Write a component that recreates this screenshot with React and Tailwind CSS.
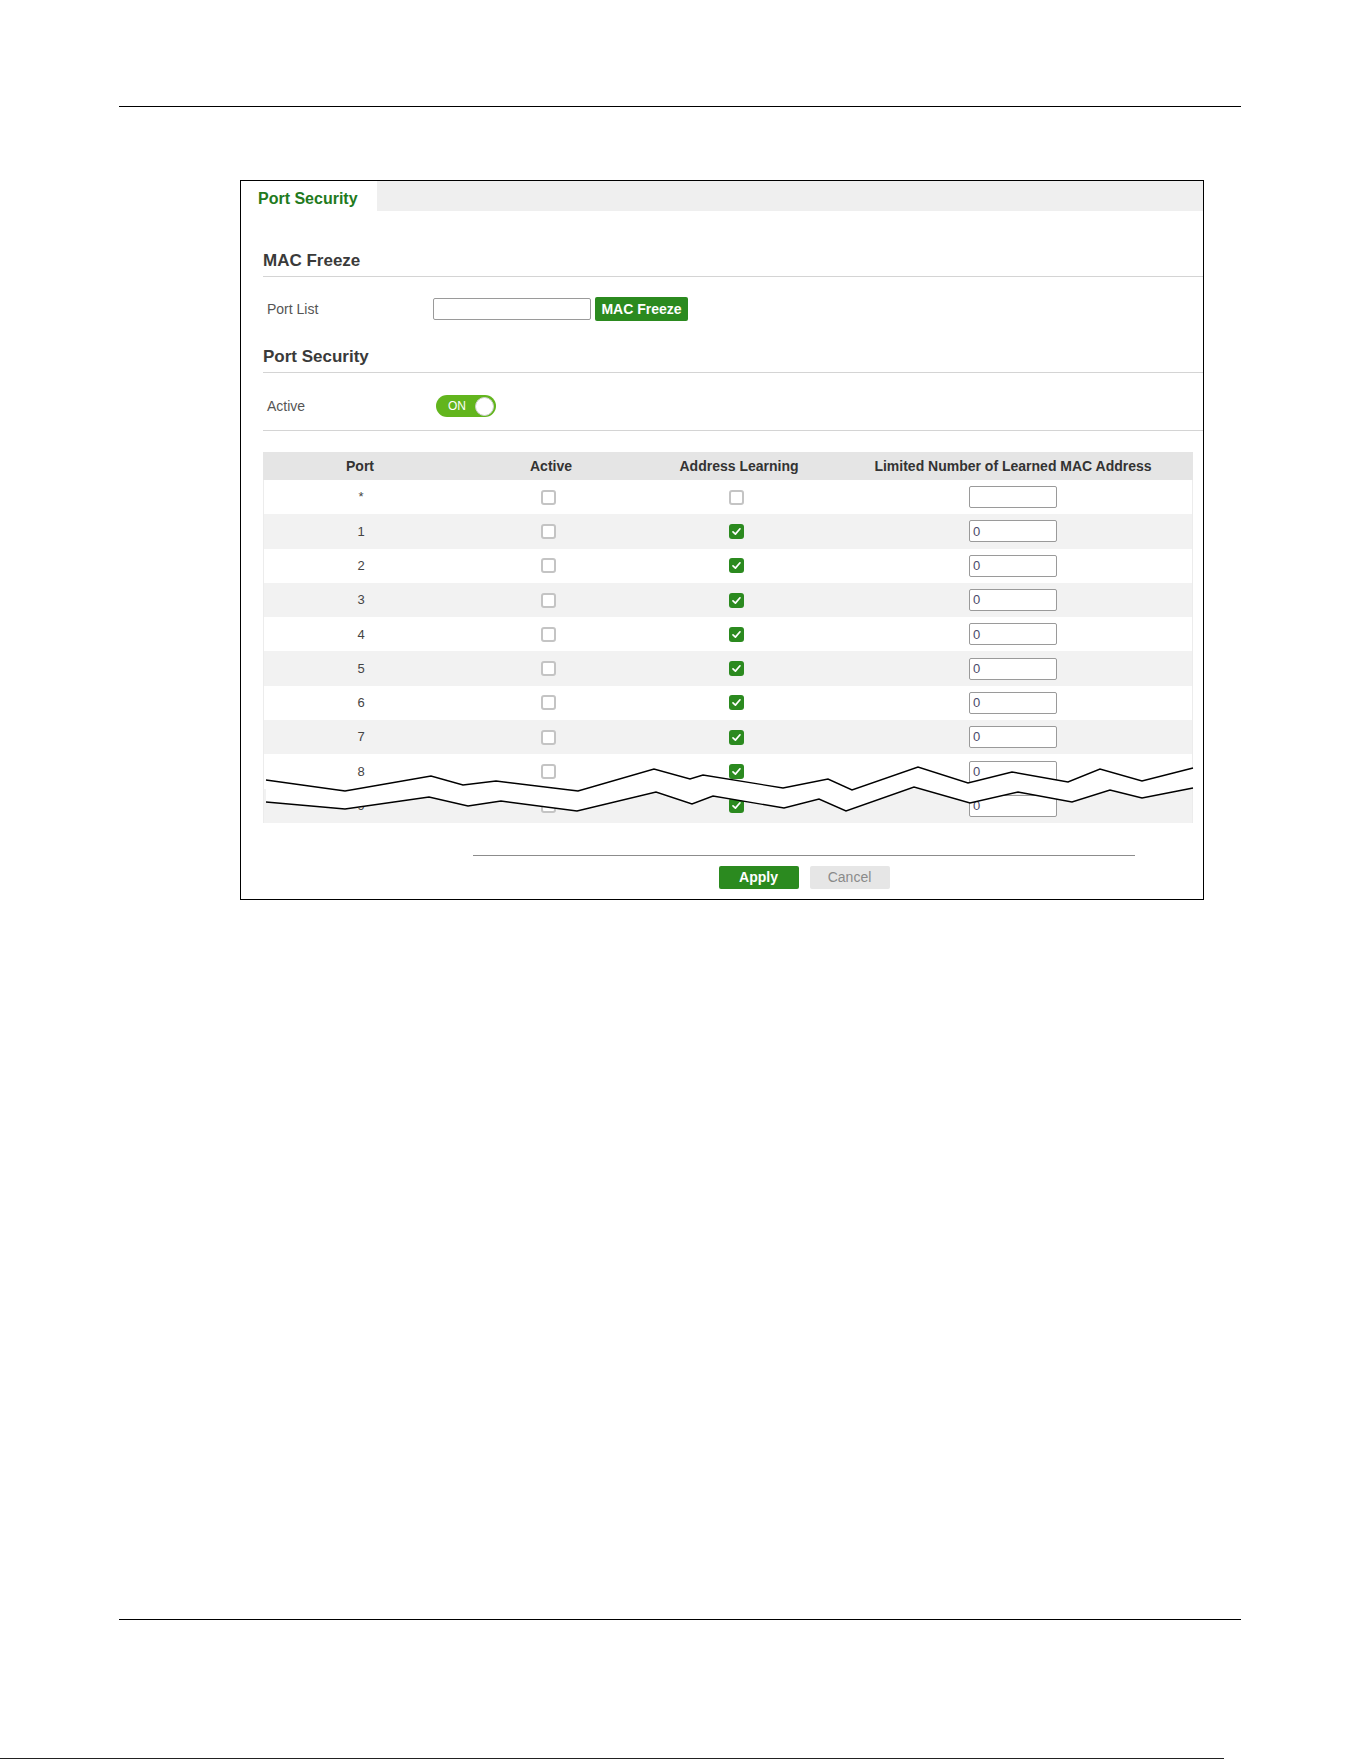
import React from 'react';

const ports = ['*', '1', '2', '3', '4', '5', '6', '7', '8', '9'];

// break marks drawn across the cut-off part of the table (table-local px)
const upperLine = [
  [3, 328], [82, 339], [168, 324], [200, 333], [233, 329], [315, 339], [391, 317],
  [427, 327], [440, 323], [520, 336], [565, 327], [589, 338], [655, 315], [705, 331],
  [749, 320], [805, 330], [837, 317], [879, 329], [930, 316],
];
const lowerLine = [
  [3, 350], [82, 357], [166, 345], [205, 354], [238, 349], [314, 359], [393, 340],
  [429, 352], [450, 344], [521, 356], [556, 347], [583, 359], [651, 335], [707, 351],
  [755, 340], [809, 350], [847, 338], [879, 346], [930, 336],
];
const toPts = (pts) => pts.map(([x, y]) => `${x},${y}`).join(' ');

const Checkbox = ({ checked }) =>
  checked ? (
    <span className="mr-[8px] flex h-[15px] w-[15px] items-center justify-center rounded-[3px] bg-[#2b8a1f]">
      <svg width="11" height="11" viewBox="0 0 11 11">
        <path d="M2 5.8 L4.4 8.1 L9 2.8" fill="none" stroke="white" strokeWidth="1.7" strokeLinecap="round" strokeLinejoin="round" />
      </svg>
    </span>
  ) : (
    <span className="mr-[8px] block h-[15px] w-[15px] rounded-[3px] border-2 border-[#c4c4c4] bg-white" />
  );

const SectionTitle = ({ children }) => (
  <div className="h-[26px] border-b border-[#d4d4d4] text-[17px] font-bold leading-[20px] text-[#3a3a3a]">
    {children}
  </div>
);

export default function App() {
  return (
    <div className="relative h-[1761px] w-[1361px] bg-white pt-[106px] font-['Liberation_Sans',Arial,sans-serif]">
      <div className="ml-[119px] h-px w-[1122px] bg-black" />

      {/* Port Security screen */}
      <div className="ml-[240px] mt-[73px] w-[964px] border border-black bg-white">
        <div className="flex h-[30px]">
          <div className="w-[136px] bg-white pl-[17px] pt-[8px] text-[16px] font-bold leading-[20px] text-[#227a1c]">
            Port Security
          </div>
          <div className="flex-1 bg-[#efefef]" />
        </div>

        <div className="pl-[22px]">
          <div className="mt-[40px]">
            <SectionTitle>MAC Freeze</SectionTitle>
          </div>

          <div className="mt-[20px] flex h-[24px] items-center">
            <div className="w-[170px] pl-[4px] text-[14px] text-[#555]">Port List</div>
            <input className="h-[22px] w-[158px] rounded-[2px] border border-[#9a9a9a] bg-white" />
            <button className="ml-[4px] h-[24px] w-[93px] rounded-[2px] bg-[#2b8a1f] text-[14px] font-bold text-white">
              MAC Freeze
            </button>
          </div>

          <div className="mt-[26px]">
            <SectionTitle>Port Security</SectionTitle>
          </div>

          <div className="mt-[22px] flex h-[22px] items-center">
            <div className="w-[170px] pl-[4px] text-[14px] text-[#555]">Active</div>
            <div className="ml-[3px] flex h-[22px] w-[60px] items-center justify-between rounded-full bg-[#62b51d] pl-[12px] pr-[2px]">
              <span className="text-[12px] leading-none text-white">ON</span>
              <span className="h-[19px] w-[19px] rounded-full border border-[#d0d0d0] bg-white" />
            </div>
          </div>

          <div className="mt-[13px] h-px bg-[#d4d4d4]" />

          {/* port table */}
          <div className="relative mt-[21px] w-[930px]">
            <div className="grid h-[28px] grid-cols-[194px_188px_188px_1fr] items-center bg-[#e5e5e5] text-center text-[14px] font-bold text-[#333]">
              <div>Port</div>
              <div>Active</div>
              <div>Address Learning</div>
              <div>Limited Number of Learned MAC Address</div>
            </div>
            <div className="border-x border-[#ececec]">
              {ports.map((port, i) => (
                <div
                  key={port}
                  className={`grid h-[34.3px] grid-cols-[194px_188px_188px_1fr] items-center text-[13px] text-[#444] ${
                    i % 2 === 1 ? 'bg-[#f2f2f2]' : 'bg-white'
                  }`}
                >
                  <div className="text-center">{port}</div>
                  <div className="flex justify-center">
                    <Checkbox checked={false} />
                  </div>
                  <div className="flex justify-center">
                    <Checkbox checked={port !== '*'} />
                  </div>
                  <div className="flex justify-center">
                    <div className="flex h-[22px] w-[88px] items-center rounded-[2px] border border-[#9a9a9a] bg-white pl-[3px] text-[13px] text-[#4a4a6a]">
                      {port === '*' ? '' : '0'}
                    </div>
                  </div>
                </div>
              ))}
            </div>

            <svg className="absolute left-0 top-0 overflow-visible" width="930" height="371" viewBox="0 0 930 371">
              <polygon points={toPts([...upperLine, ...[...lowerLine].reverse()])} fill="white" />
              <polyline points={toPts(upperLine)} fill="none" stroke="black" strokeWidth="1.4" />
              <polyline points={toPts(lowerLine)} fill="none" stroke="black" strokeWidth="1.4" />
            </svg>
          </div>
        </div>

        <div className="ml-[232px] mt-[32px] w-[662px]">
          <div className="h-px bg-[#8c8c8c]" />
          <div className="mt-[10px] mb-[10px] flex justify-center gap-[11px]">
            <button className="h-[23px] w-[80px] rounded-[2px] bg-[#2b8a1f] text-[14px] font-bold text-white">Apply</button>
            <button className="h-[23px] w-[80px] rounded-[2px] bg-[#e6e6e6] text-[14px] text-[#8a8a8a]">Cancel</button>
          </div>
        </div>
      </div>

      <div className="ml-[119px] mt-[719px] h-px w-[1122px] bg-black" />
      <div className="mt-[138px] h-px w-[1224px] bg-[#222]" />
    </div>
  );
}
